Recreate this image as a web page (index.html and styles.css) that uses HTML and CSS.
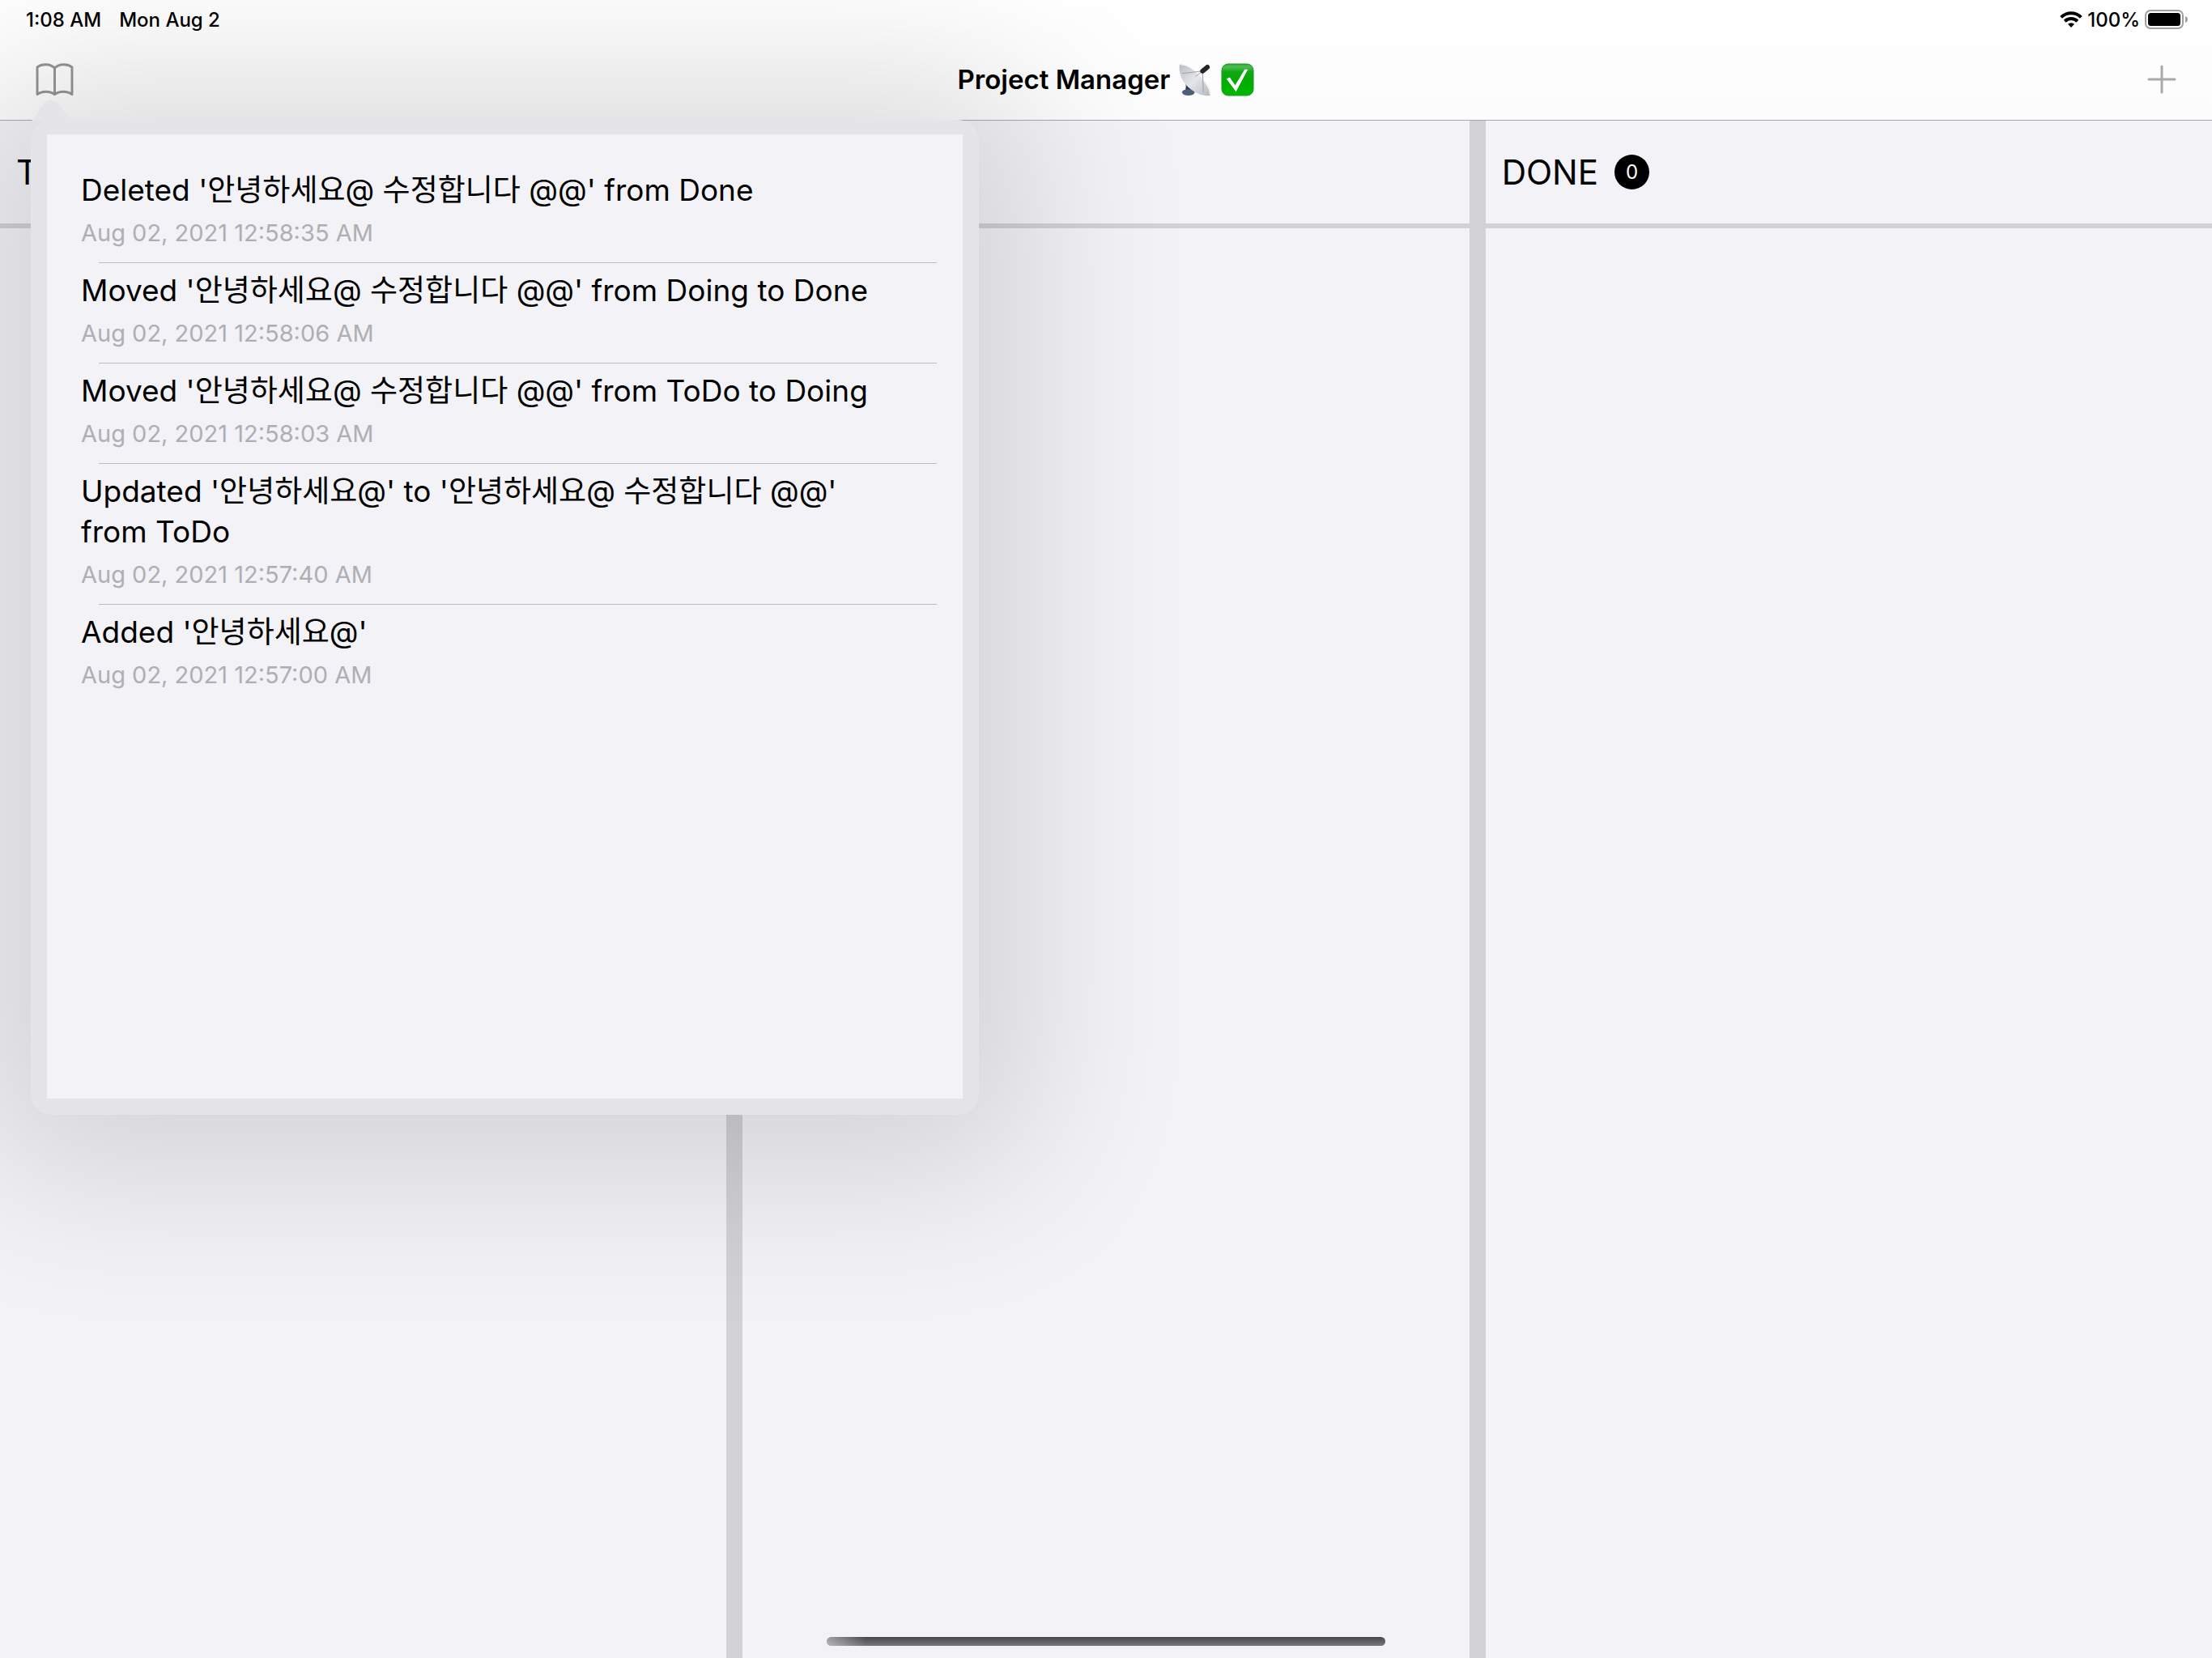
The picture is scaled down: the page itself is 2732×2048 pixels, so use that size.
FILE: index.html
```html
<!DOCTYPE html>
<html lang="en">
<head>
<meta charset="utf-8">
<meta name="viewport" content="width=device-width, initial-scale=1">
<title>Project Manager</title>
<link rel="stylesheet" href="styles.css">
</head>
<body>
<div class="app">
  <header class="top">
    <div class="status">
      <div class="status-side">
        <span>1:08 AM</span>
        <span>Mon Aug 2</span>
      </div>
      <div class="status-side status-right">
        <svg class="wifi" viewBox="0 0 28 20" role="img" aria-label="Wi-Fi">
          <g fill="none" stroke="#000" stroke-width="4">
            <path d="M1.600 7.400a17.800 17.800 0 0 1 24.800 0"/>
            <path d="M6.200 12.200a11.200 11.200 0 0 1 15.600 0"/>
          </g>
          <path d="M14 20l-4-4.200a5.800 5.800 0 0 1 8 0z"/>
        </svg>
        <span>100%</span>
        <svg class="battery" viewBox="0 0 54 24" role="img" aria-label="Battery full">
          <rect x="1" y="1" width="46" height="22" rx="6" fill="none" stroke="#a0a0a2" stroke-width="2"/>
          <rect x="4" y="4" width="40" height="16" rx="3.500"/>
          <path d="M50 8q3 1 3 4t-3 4z" fill="#a0a0a2"/>
        </svg>
      </div>
    </div>
    <nav class="navbar">
      <button class="icon-button" type="button" aria-label="History">
        <svg class="book" viewBox="0 0 48 42" fill="none" stroke="#949494" stroke-width="3" stroke-linejoin="round">
          <path d="M24 6C18 .500 8 .500 2 5V39.500C8 35 18 35 24 39.500C30 35 40 35 46 39.500V5C40 .500 30 .500 24 6ZV39.500"/>
        </svg>
      </button>
      <h1 class="title">
        <span>Project Manager</span>
        <svg class="emoji" viewBox="0 0 42 42" role="img" aria-label="Satellite antenna">
          <defs>
            <linearGradient id="dish" x1="0" y1="0" x2="1" y2="1">
              <stop offset="0" stop-color="#b9bcc2"/><stop offset=".5" stop-color="#e4e6ea"/><stop offset="1" stop-color="#b4b8c0"/>
            </linearGradient>
          </defs>
          <path d="M7 20l9 8 2 9H8l1-8z" fill="#33373e"/>
          <ellipse cx="12" cy="37" rx="8" ry="4" fill="#4b5f78"/>
          <path d="M1 2C-1 12 4 25 15 33c8 6 17 9 24 8 4-5-3-17-14-27C15 5 5-1 1 2z" fill="url(#dish)"/>
          <path d="M3 2c6-1 15 5 23 13s15 20 13 24" fill="none" stroke="#f7f8fa" stroke-width="1.500"/>
          <path d="M4 13l26-3M21 17l9-7M30 11l1 26" fill="none" stroke="#9a9ea6" stroke-width="1"/>
          <path d="M30 10l6-5" stroke="#23252b" stroke-width="6" stroke-linecap="round"/>
        </svg>
        <svg class="emoji" viewBox="0 0 42 42" role="img" aria-label="Check mark">
          <defs>
            <linearGradient id="tick" x1="0" y1="0" x2="0" y2="1">
              <stop offset="0" stop-color="#35a83b"/><stop offset=".1" stop-color="#4cbc50"/><stop offset=".25" stop-color="#12a616"/><stop offset=".5" stop-color="#00ab04"/><stop offset="1" stop-color="#00b800"/>
            </linearGradient>
          </defs>
          <rect x="1" y="1" width="40" height="40" rx="8" fill="url(#tick)" stroke="#1b9a22" stroke-width="1"/>
          <path d="M7 20l4-2 7 10L30 8h4L19 36z" fill="#fff"/>
        </svg>
      </h1>
      <button class="icon-button add" type="button" aria-label="Add">
        <svg class="plus" viewBox="0 0 36 36" stroke="#a9a9ab" stroke-width="3" stroke-linecap="round">
          <path d="M18 2V34M2 18H34"/>
        </svg>
      </button>
    </nav>
  </header>

  <main class="board">
    <section class="column">
      <div class="column-head"><h2>TODO</h2></div>
    </section>
    <section class="column">
      <div class="column-head"></div>
    </section>
    <section class="column">
      <div class="column-head"><h2>DONE</h2><span class="badge">0</span></div>
    </section>
  </main>

  <aside class="popover" aria-label="History">
    <svg class="arrow" viewBox="0 0 56 28" aria-hidden="true">
      <path d="M0 28C5 24 11 12 17 5C21 1 29 1 33 5C40 13 45 24 56 28Z"/>
    </svg>
    <ol class="history">
      <li class="entry">
        <p class="entry-title">Deleted '안녕하세요@ 수정합니다 @@' from Done</p>
        <time class="entry-date">Aug 02, 2021 12:58:35 AM</time>
      </li>
      <li class="entry">
        <p class="entry-title">Moved '안녕하세요@ 수정합니다 @@' from Doing to Done</p>
        <time class="entry-date">Aug 02, 2021 12:58:06 AM</time>
      </li>
      <li class="entry">
        <p class="entry-title">Moved '안녕하세요@ 수정합니다 @@' from ToDo to Doing</p>
        <time class="entry-date">Aug 02, 2021 12:58:03 AM</time>
      </li>
      <li class="entry">
        <p class="entry-title">Updated '안녕하세요@' to '안녕하세요@ 수정합니다 @@' from ToDo</p>
        <time class="entry-date">Aug 02, 2021 12:57:40 AM</time>
      </li>
      <li class="entry">
        <p class="entry-title">Added '안녕하세요@'</p>
        <time class="entry-date">Aug 02, 2021 12:57:00 AM</time>
      </li>
    </ol>
  </aside>

  <div class="home-indicator"></div>
</div>
</body>
</html>
```
FILE: styles.css
```css
* {
  box-sizing: border-box;
}

body,
h1,
h2,
p,
ol {
  margin: 0;
  padding: 0;
}

body {
  font-family: Inter, "Noto Sans CJK KR", sans-serif;
  color: #000;
  background: #f2f2f7;
}

svg {
  display: block;
}

.app {
  position: relative;
  display: flex;
  flex-direction: column;
  min-height: 100vh;
  overflow: hidden;
}

/* Status bar and navigation bar */
.top {
  background: linear-gradient(#fff, #fcfcfd);
  border-bottom: 1px solid #a8a8aa;
}

.status {
  display: flex;
  justify-content: space-between;
  height: 48px;
  padding: 0 29px 0 32px;
  font-size: 24px;
  font-weight: 500;
}

.status-side {
  display: flex;
  align-items: center;
  gap: 22px;
}

.status-right {
  gap: 6px;
}

.wifi {
  width: 28px;
  height: 20px;
}

.battery {
  width: 54px;
  height: 24px;
}

.navbar {
  display: grid;
  grid-template-columns: 1fr auto 1fr;
  align-items: center;
  height: 100px;
  padding: 0 40px;
}

.icon-button {
  display: flex;
  justify-self: start;
  padding: 4px;
  border: 0;
  background: none;
}

.add {
  justify-self: end;
}

.book {
  width: 47px;
  height: 41px;
}

.plus {
  width: 36px;
  height: 36px;
}

.title {
  display: flex;
  align-items: center;
  gap: 11px;
  font-size: 33px;
  font-weight: 600;
}

.emoji {
  width: 41px;
  height: 41px;
}

/* Board */
.board {
  display: grid;
  grid-template-columns: repeat(3, 1fr);
  gap: 20px;
  flex: 1;
  background: #d1d1d6;
}

.column {
  background: #f2f2f7;
}

.column-head {
  display: flex;
  align-items: center;
  gap: 20px;
  height: 133px;
  padding: 0 20px;
  border-bottom: 6px solid #d1d1d6;
}

.column-head h2 {
  font-size: 42px;
  font-weight: 400;
}

.badge {
  display: grid;
  place-items: center;
  width: 43px;
  height: 43px;
  border-radius: 50%;
  background: #000;
  color: #fff;
  font-size: 24px;
}

/* History popover */
.popover {
  position: absolute;
  top: 148px;
  left: 38px;
  width: 1171px;
  padding: 18px 20px 20px;
  border-radius: 26px;
  background: #e5e4e9;
  box-shadow: 0 8px 200px 64px rgba(0, 0, 0, 0.13);
}

.arrow {
  position: absolute;
  top: -26px;
  left: 0;
  width: 56px;
  height: 28px;
  fill: #e5e4e9;
}

.history {
  min-height: 1191px;
  padding: 34px 32px 0 42px;
  background: #f2f2f7;
  list-style: none;
}

.entry {
  position: relative;
  padding: 10px 40px 18px 0;
}

.entry:not(:last-child)::after {
  content: "";
  position: absolute;
  right: 0;
  bottom: -1px;
  left: 22px;
  height: 1px;
  background: #bcbcc0;
}

.entry-title {
  font-size: 37px;
  line-height: 50px;
}

.entry-date {
  display: block;
  margin-top: 10px;
  color: #afafb3;
  font-size: 29px;
  line-height: 36px;
}

.home-indicator {
  position: absolute;
  bottom: 15px;
  left: 50%;
  width: 690px;
  height: 11px;
  margin-left: -345px;
  border-radius: 6px;
  background: linear-gradient(90deg, rgba(242, 241, 246, 0.5), rgba(242, 241, 246, 0) 7%), linear-gradient(#48484a, #78787a);
}
```
